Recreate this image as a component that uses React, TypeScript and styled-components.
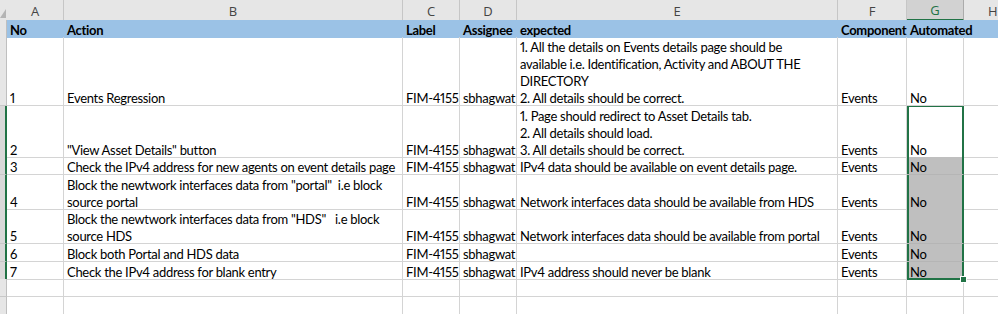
import React from "react";
import styled, { createGlobalStyle } from "styled-components";

const GlobalStyle = createGlobalStyle`
  html, body {
    margin: 0;
    padding: 0;
    background: #ffffff;
  }
  #root {
    width: 998px;
    height: 314px;
    overflow: hidden;
  }
`;

const COL_WIDTHS = [7, 57, 339, 57, 57, 321, 69, 57, 57];
const GRID = COL_WIDTHS.map((w) => `${w}px`).join(" ");
const SHEET_WIDTH = COL_WIDTHS.reduce((a, b) => a + b, 0);
const GREEN = "#217346";

type Fill = "blue" | "gray" | undefined;

interface SheetRow {
  h: number;
  header?: boolean;
  sel?: boolean;
  cells: (string | string[])[];
  grayG?: boolean;
}

const LETTERS = ["A", "B", "C", "D", "E", "F", "G", "H"];

const rows: SheetRow[] = [
  {
    h: 17,
    header: true,
    cells: ["No", "Action", "Label", "Assignee", "expected", "Component", "Automated", ""],
  },
  {
    h: 69,
    cells: [
      "1",
      "Events Regression",
      "FIM-4155",
      "sbhagwat",
      [
        "1. All the details on Events details page should be",
        "available i.e. Identification, Activity and ABOUT THE",
        "DIRECTORY",
        "2. All details should be correct.",
      ],
      "Events",
      "No",
      "",
    ],
  },
  {
    h: 51,
    sel: true,
    cells: [
      "2",
      "\"View Asset Details\" button",
      "FIM-4155",
      "sbhagwat",
      [
        "1. Page should redirect to Asset Details tab.",
        "2. All details should load.",
        "3. All details should be correct.",
      ],
      "Events",
      "No",
      "",
    ],
  },
  {
    h: 18,
    sel: true,
    grayG: true,
    cells: [
      "3",
      "Check the IPv4 address for new agents on event details page",
      "FIM-4155",
      "sbhagwat",
      "IPv4 data should be available on event details page.",
      "Events",
      "No",
      "",
    ],
  },
  {
    h: 34,
    sel: true,
    grayG: true,
    cells: [
      "4",
      ["Block the newtwork interfaces data from \"portal\"  i.e block", "source portal"],
      "FIM-4155",
      "sbhagwat",
      "Network interfaces data should be available from HDS",
      "Events",
      "No",
      "",
    ],
  },
  {
    h: 35,
    sel: true,
    grayG: true,
    cells: [
      "5",
      ["Block the newtwork interfaces data from \"HDS\"   i.e block", "source HDS"],
      "FIM-4155",
      "sbhagwat",
      "Network interfaces data should be available from portal",
      "Events",
      "No",
      "",
    ],
  },
  {
    h: 18,
    sel: true,
    grayG: true,
    cells: ["6", "Block both Portal and HDS data", "FIM-4155", "sbhagwat", "", "Events", "No", ""],
  },
  {
    h: 17,
    sel: true,
    grayG: true,
    cells: [
      "7",
      "Check the IPv4 address for blank entry",
      "FIM-4155",
      "sbhagwat",
      "IPv4 address should never be blank",
      "Events",
      "No",
      "",
    ],
  },
  { h: 18, cells: ["", "", "", "", "", "", "", ""] },
  { h: 17, cells: ["", "", "", "", "", "", "", ""] },
];

export default function App() {
  const lastSel = rows.map((r) => !!r.sel).lastIndexOf(true);
  const firstSel = rows.findIndex((r) => r.sel);

  return (
    <>
      <GlobalStyle />
      <Sheet>
        <Row $h={20}>
          <Corner>
            <CornerTriangle />
          </Corner>
          {LETTERS.map((l, i) => (
            <ColHead key={l} $active={l === "G"} $clipped={i === LETTERS.length - 1}>
              {l}
            </ColHead>
          ))}
        </Row>
        {rows.map((row, ri) => (
          <Row key={ri} $h={row.h}>
            <RowStub $sel={row.sel} />
            {row.cells.map((c, ci) => {
              const lines = Array.isArray(c) ? c : [c];
              const isG = ci === 6;
              const fill: Fill = row.header ? "blue" : isG && row.grayG ? "gray" : undefined;
              return (
                <Cell
                  key={ci}
                  $fill={fill}
                  $bold={row.header}
                  $sel={isG && row.sel}
                  $selTop={isG && ri === firstSel}
                  $selBottom={isG && ri === lastSel}
                >
                  {lines.map((t, li) => (
                    <Line key={li}>{t}</Line>
                  ))}
                  {isG && ri === lastSel && <FillHandle />}
                </Cell>
              );
            })}
          </Row>
        ))}
      </Sheet>
    </>
  );
}

const Sheet = styled.div`
  display: flex;
  flex-direction: column;
  width: ${SHEET_WIDTH}px;
  min-width: ${SHEET_WIDTH}px;
  font-family: Lato, "Liberation Sans", sans-serif;
  font-size: 13px;
  letter-spacing: -0.3px;
  font-variant-numeric: proportional-nums;
  color: #000000;
`;

const Row = styled.div<{ $h: number }>`
  display: grid;
  grid-template-columns: ${GRID};
  width: ${SHEET_WIDTH}px;
  height: ${(p) => p.$h}px;
  flex-shrink: 0;
`;

const Corner = styled.div`
  background: #e6e6e6;
  border-bottom: 1px solid #ababab;
  box-sizing: border-box;
  display: flex;
  align-items: flex-end;
  justify-content: flex-end;
  padding: 0 1px 2px 0;
`;

const CornerTriangle = styled.div`
  width: 0;
  height: 0;
  border-left: 6px solid transparent;
  border-bottom: 9px solid #b4b4b4;
`;

const ColHead = styled.div<{ $active?: boolean; $clipped?: boolean }>`
  box-sizing: border-box;
  display: flex;
  align-items: center;
  justify-content: ${(p) => (p.$clipped ? "flex-start" : "center")};
  padding: 1px 0 0 ${(p) => (p.$clipped ? "24px" : "0")};
  font-family: "Open Sans", "Noto Sans", sans-serif;
  font-size: 13px;
  letter-spacing: 0;
  color: ${(p) => (p.$active ? GREEN : "#444444")};
  background: ${(p) => (p.$active ? "#d2d2d2" : "#e6e6e6")};
  border-right: 1px solid ${(p) => (p.$active ? "#ababab" : "#c6c6c6")};
  border-bottom: ${(p) => (p.$active ? `2px solid ${GREEN}` : "1px solid #ababab")};
`;

const RowStub = styled.div<{ $sel?: boolean }>`
  box-sizing: border-box;
  background: ${(p) => (p.$sel ? "#d9d9d9" : "#e6e6e6")};
  border-bottom: 1px solid #c8c8c8;
  border-right: ${(p) => (p.$sel ? `2px solid ${GREEN}` : "1px solid #bfbfbf")};
`;

const fillColor = (f: Fill) => (f === "blue" ? "#9bc2e6" : f === "gray" ? "#bfbfbf" : "transparent");

const lineColor = (f: Fill) => (f === "blue" ? "#9bc2e6" : f === "gray" ? "#b5b5b5" : "#d4d4d4");

const Cell = styled.div<{
  $fill?: Fill;
  $bold?: boolean;
  $sel?: boolean;
  $selTop?: boolean;
  $selBottom?: boolean;
}>`
  position: relative;
  box-sizing: border-box;
  display: flex;
  flex-direction: column;
  justify-content: flex-end;
  padding: 0 3px;
  font-weight: ${(p) => (p.$bold ? 700 : 400)};
  background: ${(p) => fillColor(p.$fill)};
  border-right: 1px solid ${(p) => (p.$sel ? GREEN : lineColor(p.$fill))};
  border-bottom: 1px solid ${(p) => (p.$selBottom ? GREEN : lineColor(p.$fill))};
  box-shadow: ${(p) =>
    p.$sel
      ? [
          `inset 2px 0 0 ${GREEN}`,
          `inset -1px 0 0 ${GREEN}`,
          p.$selTop ? `inset 0 1px 0 ${GREEN}` : "",
          p.$selBottom ? `inset 0 -1px 0 ${GREEN}` : "",
        ]
          .filter(Boolean)
          .join(", ")
      : "none"};
  white-space: pre;
`;

/* 17px rows, glyphs sit a little low in the line like Excel's bottom-aligned cells */
const Line = styled.span`
  position: relative;
  z-index: 1;
  display: block;
  height: 17px;
  line-height: 20px;
`;

const FillHandle = styled.div`
  position: absolute;
  right: -4px;
  bottom: -4px;
  width: 5px;
  height: 5px;
  background: ${GREEN};
  border: 1px solid #ffffff;
  z-index: 3;
`;
